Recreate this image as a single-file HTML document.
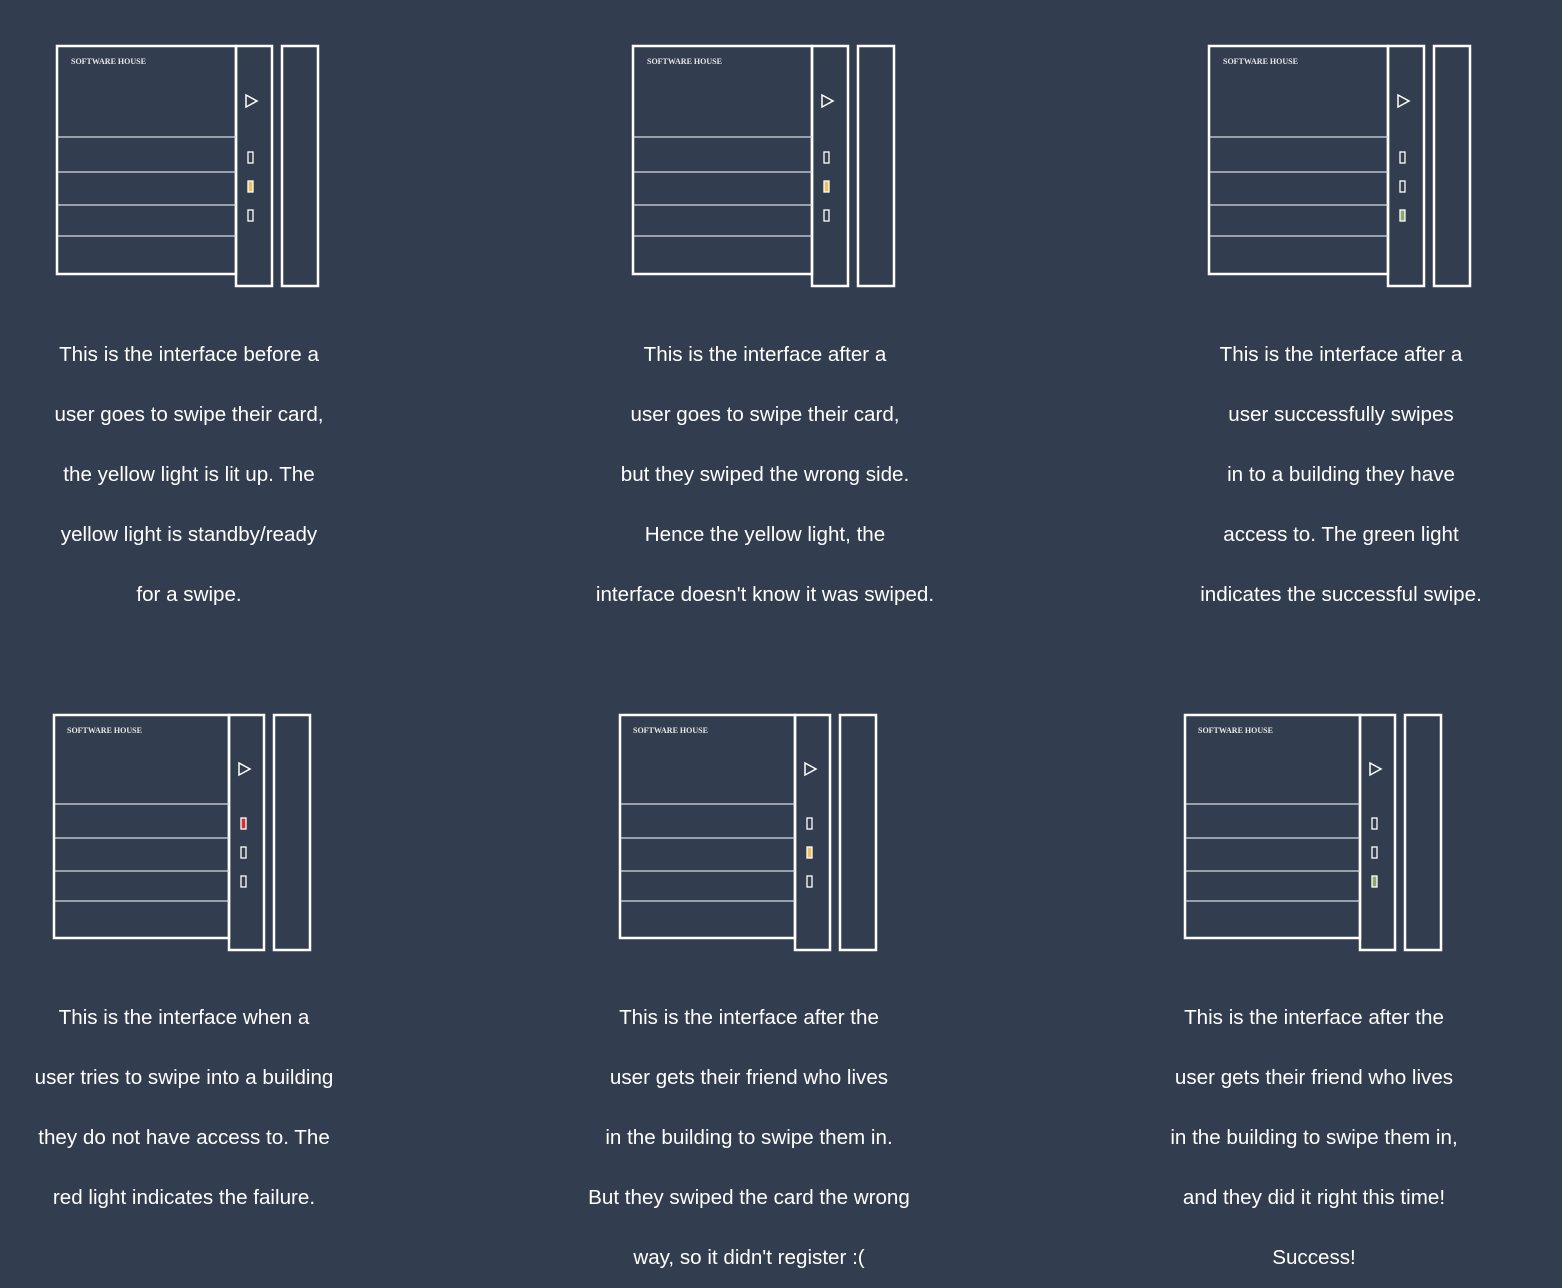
<!DOCTYPE html>
<html><head><meta charset="utf-8"><style>
body{margin:0;width:1562px;height:1270px;background:#323e4f;overflow:hidden;font-family:"Liberation Sans",Arial,sans-serif;color:#fff;position:relative}
svg{position:absolute;overflow:visible}
.t{position:absolute;width:500px;text-align:center;font-size:20.6px;line-height:60px}
</style></head><body>
<svg width="0" height="0" style="position:absolute"><defs>
<g id="dev">
<rect x="0" y="0" width="179" height="228" fill="none" stroke="#fff" stroke-width="2.5"/>
<rect x="179" y="0" width="36" height="240" fill="none" stroke="#fff" stroke-width="2.5"/>
<rect x="225" y="0" width="36" height="240" fill="none" stroke="#fff" stroke-width="2.5"/>
<g stroke="#d8dce2" stroke-width="1.3"><line x1="1" y1="91" x2="179" y2="91"/><line x1="1" y1="126" x2="179" y2="126"/><line x1="1" y1="159" x2="179" y2="159"/><line x1="1" y1="190" x2="179" y2="190"/></g>
<path d="M189 49 L200 55 L189 61 Z" fill="none" stroke="#fff" stroke-width="1.5"/>
<text x="14" y="18" font-family="Liberation Serif,serif" font-weight="bold" font-size="8" fill="#e8e8e8">SOFTWARE HOUSE</text>
</g>
<g id="dev2">
<rect x="0" y="0" width="175" height="223" fill="none" stroke="#fff" stroke-width="2.5"/>
<rect x="175" y="0" width="35" height="235" fill="none" stroke="#fff" stroke-width="2.5"/>
<rect x="220" y="0" width="36" height="235" fill="none" stroke="#fff" stroke-width="2.5"/>
<g stroke="#d8dce2" stroke-width="1.3"><line x1="1" y1="89" x2="175" y2="89"/><line x1="1" y1="123" x2="175" y2="123"/><line x1="1" y1="156" x2="175" y2="156"/><line x1="1" y1="186" x2="175" y2="186"/></g>
<path d="M185 48 L196 54 L185 60 Z" fill="none" stroke="#fff" stroke-width="1.5"/>
<text x="13" y="18" font-family="Liberation Serif,serif" font-weight="bold" font-size="8" fill="#e8e8e8">SOFTWARE HOUSE</text>
</g></defs></svg>

<svg style="left:57px;top:46px" width="262" height="242"><use href="#dev"/>
<rect x="191" y="106" width="5" height="11" fill="none" stroke="#fff" stroke-width="1.3"/><rect x="191" y="135" width="5" height="11" fill="#f0c050" stroke="#fff" stroke-width="1.3"/><rect x="191" y="164" width="5" height="11" fill="none" stroke="#fff" stroke-width="1.3"/></svg>
<svg style="left:633px;top:46px" width="262" height="242"><use href="#dev"/>
<rect x="191" y="106" width="5" height="11" fill="none" stroke="#fff" stroke-width="1.3"/><rect x="191" y="135" width="5" height="11" fill="#f0c050" stroke="#fff" stroke-width="1.3"/><rect x="191" y="164" width="5" height="11" fill="none" stroke="#fff" stroke-width="1.3"/></svg>
<svg style="left:1209px;top:46px" width="262" height="242"><use href="#dev"/>
<rect x="191" y="106" width="5" height="11" fill="none" stroke="#fff" stroke-width="1.3"/><rect x="191" y="135" width="5" height="11" fill="none" stroke="#fff" stroke-width="1.3"/><rect x="191" y="164" width="5" height="11" fill="#8aaa6a" stroke="#fff" stroke-width="1.3"/></svg>
<svg style="left:54px;top:715px" width="262" height="242"><use href="#dev2"/>
<rect x="187" y="103" width="5" height="11" fill="#d03030" stroke="#fff" stroke-width="1.3"/><rect x="187" y="132" width="5" height="11" fill="none" stroke="#fff" stroke-width="1.3"/><rect x="187" y="161" width="5" height="11" fill="none" stroke="#fff" stroke-width="1.3"/></svg>
<svg style="left:620px;top:715px" width="262" height="242"><use href="#dev2"/>
<rect x="187" y="103" width="5" height="11" fill="none" stroke="#fff" stroke-width="1.3"/><rect x="187" y="132" width="5" height="11" fill="#f0c050" stroke="#fff" stroke-width="1.3"/><rect x="187" y="161" width="5" height="11" fill="none" stroke="#fff" stroke-width="1.3"/></svg>
<svg style="left:1185px;top:715px" width="262" height="242"><use href="#dev2"/>
<rect x="187" y="103" width="5" height="11" fill="none" stroke="#fff" stroke-width="1.3"/><rect x="187" y="132" width="5" height="11" fill="none" stroke="#fff" stroke-width="1.3"/><rect x="187" y="161" width="5" height="11" fill="#8aaa6a" stroke="#fff" stroke-width="1.3"/></svg>

<div class="t" style="left:-61px;top:325px">This is the interface before a<br>user goes to swipe their card,<br>the yellow light is lit up. The<br>yellow light is standby/ready<br>for a swipe.</div>
<div class="t" style="left:515px;top:325px">This is the interface after a<br>user goes to swipe their card,<br>but they swiped the wrong side.<br>Hence the yellow light, the<br>interface doesn't know it was swiped.</div>
<div class="t" style="left:1091px;top:325px">This is the interface after a<br>user successfully swipes<br>in to a building they have<br>access to. The green light<br>indicates the successful swipe.</div>
<div class="t" style="left:-66px;top:988px">This is the interface when a<br>user tries to swipe into a building<br>they do not have access to. The<br>red light indicates the failure.</div>
<div class="t" style="left:499px;top:988px">This is the interface after the<br>user gets their friend who lives<br>in the building to swipe them in.<br>But they swiped the card the wrong<br>way, so it didn't register :(</div>
<div class="t" style="left:1064px;top:988px">This is the interface after the<br>user gets their friend who lives<br>in the building to swipe them in,<br>and they did it right this time!<br>Success!</div>
</body></html>
